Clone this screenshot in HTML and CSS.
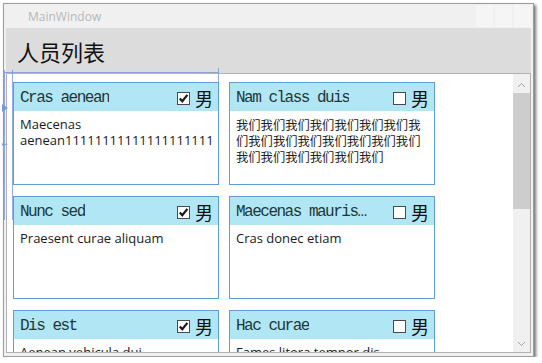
FILE: index.html
```html
<!DOCTYPE html>
<html>
    <head>
        <title>MainWindow</title>
        <meta name="viewport" content="width=device-width, initial-scale=1">
        <link rel="stylesheet" href="styles.css">
    </head>

    <body>
        <div class="window">
            <div class="titlebar">
                <span class="title">MainWindow</span>
                <div class="caption-buttons"><i></i><i></i><i></i></div>
            </div>

            <div class="page-header">人员列表</div>

            <div class="list">
                <div class="cards">
                    <div class="card">
                        <div class="card-head">
                            <span class="name">Cras aenean</span>
                            <span class="gender"><span class="check on"><svg viewBox="0 0 11 11"><path d="M1.8 5.4 L4.3 8.2 L9.4 1.9"/></svg></span>男</span>
                        </div>
                        <div class="card-body">Maecenas aenean11111111111111111111</div>
                    </div>
                    <div class="card">
                        <div class="card-head">
                            <span class="name">Nam class duis</span>
                            <span class="gender"><span class="check"></span>男</span>
                        </div>
                        <div class="card-body cjk">我们我们我们我们我们我们我们我们我们我们我们我们我们我们我们我们我们我们我们我们我们</div>
                    </div>
                    <div class="card">
                        <div class="card-head">
                            <span class="name">Nunc sed</span>
                            <span class="gender"><span class="check on"><svg viewBox="0 0 11 11"><path d="M1.8 5.4 L4.3 8.2 L9.4 1.9"/></svg></span>男</span>
                        </div>
                        <div class="card-body">Praesent curae aliquam</div>
                    </div>
                    <div class="card">
                        <div class="card-head">
                            <span class="name short">Maecenas mauris lorem</span>
                            <span class="gender"><span class="check"></span>男</span>
                        </div>
                        <div class="card-body">Cras donec etiam</div>
                    </div>
                    <div class="card">
                        <div class="card-head">
                            <span class="name">Dis est</span>
                            <span class="gender"><span class="check on"><svg viewBox="0 0 11 11"><path d="M1.8 5.4 L4.3 8.2 L9.4 1.9"/></svg></span>男</span>
                        </div>
                        <div class="card-body">Aenean vehicula dui</div>
                    </div>
                    <div class="card">
                        <div class="card-head">
                            <span class="name">Hac curae</span>
                            <span class="gender"><span class="check"></span>男</span>
                        </div>
                        <div class="card-body">Fames litora tempor dis</div>
                    </div>
                </div>

                <div class="scrollbar">
                    <div class="arrow"><svg viewBox="0 0 9 6"><path d="M1 5 L4.5 1.5 L8 5"/></svg></div>
                    <div class="track"><div class="thumb"></div></div>
                    <div class="arrow"><svg viewBox="0 0 9 6"><path d="M1 1 L4.5 4.5 L8 1"/></svg></div>
                </div>
            </div>
        </div>

        <!-- designer adorners -->
        <div class="adorner-h"></div>
        <div class="adorner-v left"></div>
        <div class="adorner-v inner"></div>
        <div class="adorner-tick"></div>
        <div class="adorner-arrow"></div>
        <div class="adorner-label">1</div>
    </body>
</html>
```

FILE: styles.css
```css
body {
    margin: 0;
    padding: 0;
    background: #fff;
    font-family: "Open Sans", "Liberation Sans", sans-serif;
    overflow: hidden;
}

.window {
    box-sizing: border-box;
    width: 531px;
    height: 354px;
    margin: 3px 0 0 3px;
    padding: 0 2px 3px 2px;
    border: 1px solid #9c9c9c;
    background: #f0f0f0;
    box-shadow: 2px 2px 3px rgba(0, 0, 0, 0.55);
    display: flex;
    flex-direction: column;
}

.titlebar {
    height: 24px;
    flex: none;
    display: flex;
    align-items: center;
    justify-content: space-between;
}

.title {
    padding-left: 22px;
    font-size: 12px;
    color: #b8b8b8;
}

.caption-buttons {
    display: flex;
    gap: 2px;
    align-self: stretch;
    padding: 1px 0 1px;
}

.caption-buttons i {
    width: 17px;
    background: #f5f5f5;
}

.page-header {
    height: 45px;
    flex: none;
    display: flex;
    align-items: center;
    padding-left: 11px;
    background: #dcdcdc;
    font-family: "Noto Sans CJK SC", sans-serif;
    font-size: 22px;
    color: #111;
}

.list {
    flex: 1;
    min-height: 0;
    display: flex;
    background: #fff;
    border: 1px solid #b2b2b2;
}

.cards {
    flex: 1;
    display: grid;
    grid-template-columns: 206px 206px;
    grid-auto-rows: 103px;
    column-gap: 10px;
    row-gap: 11px;
    align-content: start;
    padding: 8px 0 0 6px;
    overflow: hidden;
}

.card {
    box-sizing: border-box;
    border: 1px solid #5f9fd9;
    background: #fff;
    display: flex;
    flex-direction: column;
    overflow: hidden;
}

.card-head {
    box-sizing: border-box;
    height: 28px;
    flex: none;
    display: flex;
    align-items: center;
    justify-content: space-between;
    padding: 2px 5px 0 6px;
    background: #b1e6f5;
}

.name {
    font-family: "Liberation Mono", monospace;
    font-size: 16px;
    letter-spacing: -1.5px;
    color: #1e3838;
    white-space: nowrap;
    overflow: hidden;
    text-overflow: ellipsis;
}

.name.short {
    max-width: 132px;
}

.gender {
    display: flex;
    align-items: center;
    gap: 5px;
    font-family: "Noto Sans CJK SC", sans-serif;
    font-size: 18px;
    color: #111;
}

.check {
    box-sizing: border-box;
    width: 13px;
    height: 13px;
    border: 1px solid #4a4a4a;
    background: #fff;
    display: flex;
}

.check svg {
    width: 11px;
    height: 11px;
    fill: none;
    stroke: #1a1a1a;
    stroke-width: 2.2;
}

.card-body {
    padding: 5px 6px;
    font-size: 13px;
    line-height: 16px;
    color: #1a1a1a;
}

.card-body.cjk {
    padding-top: 6px;
    font-family: "Noto Sans CJK SC", sans-serif;
    font-size: 12.3px;
    color: #222;
}

.scrollbar {
    width: 17px;
    flex: none;
    display: flex;
    flex-direction: column;
    background: #f0f0f0;
    padding-top: 2px;
}

.arrow {
    height: 17px;
    display: flex;
    align-items: center;
    justify-content: center;
}

.arrow svg {
    width: 9px;
    height: 6px;
    fill: none;
    stroke: #a6a6a6;
    stroke-width: 1;
}

.track {
    flex: 1;
}

.thumb {
    height: 116px;
    background: #cdcdcd;
}

.adorner-h,
.adorner-v,
.adorner-tick {
    position: absolute;
    background: #7898d8;
    opacity: 0.8;
}

.adorner-h {
    left: 4px;
    top: 72px;
    width: 215px;
    height: 1px;
}

.adorner-v {
    top: 70px;
    width: 1px;
    height: 150px;
}

.adorner-v.left {
    left: 4px;
}

.adorner-v.inner {
    left: 12px;
}

.adorner-tick {
    left: 218px;
    top: 68px;
    width: 1px;
    height: 14px;
}

.adorner-arrow {
    position: absolute;
    left: 2px;
    top: 104px;
    width: 0;
    height: 0;
    border-top: 4px solid transparent;
    border-bottom: 4px solid transparent;
    border-left: 6px solid #7898d8;
}

.adorner-label {
    position: absolute;
    left: 2px;
    top: 140px;
    font-family: "Liberation Sans", sans-serif;
    font-size: 8px;
    color: #7898d8;
    transform: rotate(90deg);
}
```
